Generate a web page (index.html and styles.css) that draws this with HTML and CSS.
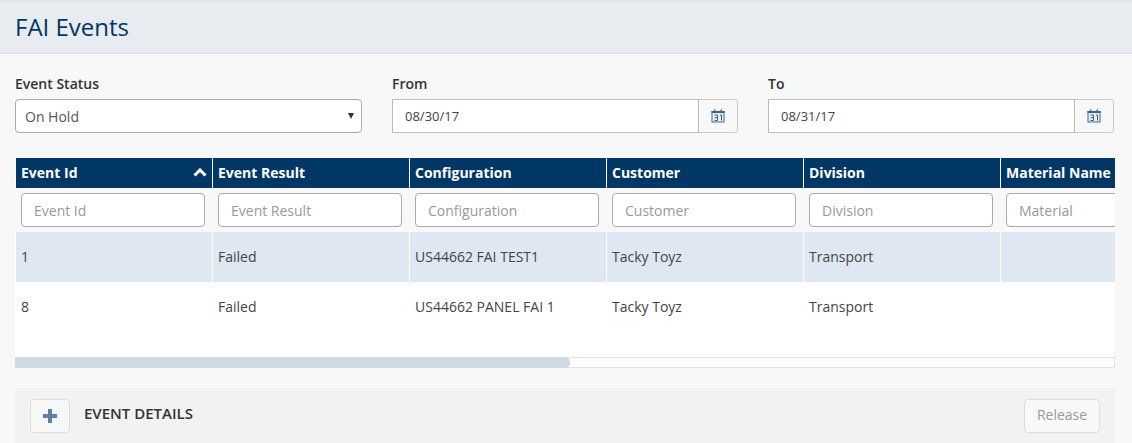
FILE: index.html
```html
<!DOCTYPE html>
<html>
<head>
	<meta charset="utf-8">
	<title>FAI Events</title>
	<link rel="stylesheet" href="styles.css">
</head>
<body>
	<div class="page-head"><h1>FAI Events</h1></div>

	<div class="filters">
		<div class="field">
			<label>Event Status</label>
			<div class="select"><span>On Hold</span><i class="caret"></i></div>
		</div>
		<div class="field">
			<label>From</label>
			<div class="date">
				<div class="date-val">08/30/17</div>
				<div class="date-btn">
					<svg width="14" height="14" viewBox="0 0 14 14"><rect x="1" y="2.500" width="12" height="10.500" fill="#e6f0f7" stroke="#2f6f9f"/><rect x="0.500" y="2" width="13" height="2" fill="#2a6796"/><rect x="3" y="0.500" width="1.500" height="2.500" fill="#4a6f8f"/><rect x="9.500" y="0.500" width="1.500" height="2.500" fill="#4a6f8f"/><path d="M3.500 6h3v5.500h-3M3.500 8.700h3M9 6h1.500v5.500" fill="none" stroke="#5a5a5a" stroke-width="1"/></svg>
				</div>
			</div>
		</div>
		<div class="field">
			<label>To</label>
			<div class="date">
				<div class="date-val">08/31/17</div>
				<div class="date-btn">
					<svg width="14" height="14" viewBox="0 0 14 14"><rect x="1" y="2.500" width="12" height="10.500" fill="#e6f0f7" stroke="#2f6f9f"/><rect x="0.500" y="2" width="13" height="2" fill="#2a6796"/><rect x="3" y="0.500" width="1.500" height="2.500" fill="#4a6f8f"/><rect x="9.500" y="0.500" width="1.500" height="2.500" fill="#4a6f8f"/><path d="M3.500 6h3v5.500h-3M3.500 8.700h3M9 6h1.500v5.500" fill="none" stroke="#5a5a5a" stroke-width="1"/></svg>
				</div>
			</div>
		</div>
	</div>

	<div class="grid-wrap">
		<table class="grid">
			<thead>
				<tr class="titles">
					<th><div class="sort">Event Id<svg width="14" height="9" viewBox="0 0 14 9"><path d="M1.500 7.500L7 2l5.500 5.500" fill="none" stroke="#fff" stroke-width="3"/></svg></div></th>
					<th>Event Result</th>
					<th>Configuration</th>
					<th>Customer</th>
					<th>Division</th>
					<th>Material Name</th>
				</tr>
				<tr class="searches">
					<td><div class="search">Event Id</div></td>
					<td><div class="search">Event Result</div></td>
					<td><div class="search">Configuration</div></td>
					<td><div class="search">Customer</div></td>
					<td><div class="search">Division</div></td>
					<td><div class="search">Material</div></td>
				</tr>
			</thead>
			<tbody>
				<tr class="picked">
					<td>1</td>
					<td>Failed</td>
					<td>US44662 FAI TEST1</td>
					<td>Tacky Toyz</td>
					<td>Transport</td>
					<td></td>
				</tr>
				<tr>
					<td>8</td>
					<td>Failed</td>
					<td>US44662 PANEL FAI 1</td>
					<td>Tacky Toyz</td>
					<td>Transport</td>
					<td></td>
				</tr>
			</tbody>
		</table>
		<div class="spacer"></div>
		<div class="scroll"><div class="thumb"></div></div>
	</div>

	<div class="details">
		<div class="plus">
			<svg width="14" height="14" viewBox="0 0 14 14"><path d="M7 0v14M0 7h14" stroke="#5a82a8" stroke-width="4" fill="none"/></svg>
		</div>
		<div class="details-title">EVENT DETAILS</div>
		<div class="release">Release</div>
	</div>
</body>
</html>
```
FILE: styles.css
```css
*{
	margin: 0;
	padding: 0;
	box-sizing: border-box;
}
html, body{
	height: 100%;
	overflow: hidden;
}
body{
	background: #f8f8f8;
	font-family: "Open Sans", sans-serif;
	font-size: 14px;
	color: #333;
}
.page-head{
	height: 54px;
	background: #e8ebf0;
	border-top: 2px solid #e2e4e9;
	border-bottom: 1px solid #dcdfe4;
	padding: 9px 0 0 15px;
}
.page-head h1{
	font-size: 24px;
	line-height: 32px;
	font-weight: 400;
	color: #003764;
}
.filters{
	display: grid;
	grid-template-columns: 347px 346px 346px;
	column-gap: 30px;
	padding: 20px 0 0 15px;
}
.field label{
	display: block;
	height: 25px;
	line-height: 20px;
	font-size: 14px;
	font-weight: 600;
	color: #333;
}
.select{
	display: flex;
	align-items: center;
	justify-content: space-between;
	height: 34px;
	background: #fff;
	border: 1px solid #aaa;
	border-radius: 4px;
	padding: 0 7px 0 9px;
	color: #555;
}
.caret{
	width: 0;
	height: 0;
	border-left: 3px solid transparent;
	border-right: 3px solid transparent;
	border-top: 6px solid #333;
}
.date{
	display: flex;
	height: 34px;
}
.date-val{
	flex: 1;
	background: #fff;
	border: 1px solid #bbb;
	padding-left: 12px;
	font-size: 13px;
	line-height: 32px;
	color: #444;
}
.date-btn{
	display: flex;
	align-items: center;
	justify-content: center;
	width: 39px;
	border: 1px solid #ccc;
	border-left: 0;
	border-radius: 0 4px 4px 0;
}
.grid-wrap{
	width: 1100px;
	margin: 25px 0 0 15px;
	overflow: hidden;
	background: #fff;
}
.grid{
	width: 1182px;
	table-layout: fixed;
	border-collapse: separate;
	border-spacing: 0;
}
.titles th{
	height: 30px;
	padding: 0 5px 2px 5px;
	background: #003764;
	color: #fff;
	font-size: 14px;
	font-weight: 700;
	text-align: left;
	white-space: nowrap;
	border-left: 1px solid #fff;
}
.sort{
	display: flex;
	align-items: center;
	justify-content: space-between;
}
.searches td{
	height: 44px;
	padding: 5px 7px 5px 6px;
	background: #f8f8f8;
}
.search{
	height: 34px;
	background: #fff;
	border: 1px solid #aaa;
	border-radius: 4px;
	padding-left: 12px;
	line-height: 33px;
	font-size: 14px;
	color: #999;
	white-space: nowrap;
}
tbody td{
	height: 50px;
	padding: 0 5px 2px 5px;
	font-size: 14px;
	color: #444;
	border-left: 1px solid #fff;
	white-space: nowrap;
}
tr.picked td{
	background: #dee7f2;
}
.spacer{
	height: 25px;
}
.scroll{
	height: 11px;
	background: #fdfdfd;
	border: 1px solid #e2e2e2;
	border-left: 0;
}
.thumb{
	width: 555px;
	height: 11px;
	margin-top: -1px;
	background: #cfd9e2;
	border-radius: 0 5px 5px 0;
}
.details{
	display: flex;
	align-items: center;
	width: 1100px;
	height: 55px;
	margin: 20px 0 0 15px;
	padding: 0 15px;
	background: #f2f2f2;
}
.plus{
	display: flex;
	align-items: center;
	justify-content: center;
	width: 40px;
	height: 34px;
	background: #f8f8f8;
	border: 1px solid #ddd;
	border-radius: 4px;
}
.details-title{
	flex: 1;
	margin-left: 14px;
	padding-bottom: 6px;
	font-size: 15px;
	font-weight: 600;
	color: #333;
}
.release{
	width: 76px;
	height: 34px;
	background: #f8f8f8;
	border: 1px solid #ddd;
	border-radius: 4px;
	text-align: center;
	line-height: 30px;
	color: #999;
}
```
